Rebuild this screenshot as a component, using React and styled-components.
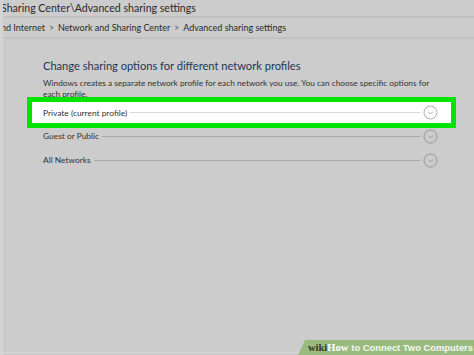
import React from "react";
import styled, { createGlobalStyle } from "styled-components";

const Global = createGlobalStyle`
  html, body { margin: 0; padding: 0; background: #cccccc; }
  body { font-family: Lato, "Open Sans", sans-serif; }
`;

const Page = styled.div`
  width: 474px;
  height: 355px;
  background: #cccccc;
  position: relative;
  overflow: hidden;
  display: flex;
  flex-direction: column;
  border-left: 3px solid #d4d4d4;
  box-sizing: border-box;
`;

const TitleBar = styled.div`
  height: 16px;
  display: flex;
  align-items: center;
  font-size: 10.6px;
  color: #2a2a2a;
  margin-left: -2px;
  border-bottom: 2px solid #c2c2c2;
  white-space: nowrap;
`;

const Breadcrumb = styled.div`
  height: 19px;
  display: flex;
  align-items: center;
  gap: 4px;
  font-size: 9px;
  color: #2a2a2a;
  margin-left: -2px;
  border-bottom: 2px solid #c2c2c2;
  white-space: nowrap;
`;

const Sep = styled.span`
  font-size: 8.5px;
  color: #555;
`;

const Content = styled.div`
  padding: 18px 0 0 40px;
  display: flex;
  flex-direction: column;
`;

const Heading = styled.div`
  font-size: 11.1px;
  color: #1d3654;
  line-height: 17px;
`;

const Desc = styled.div`
  margin-top: 4px;
  font-size: 8.3px;
  line-height: 11px;
  color: #333;
  width: 400px;
`;

const Highlight = styled.div`
  margin: -3px 0 0 -16px;
  width: 429px;
  height: 31px;
  box-sizing: border-box;
  border: 5px solid #00e400;
  background: #ffffff;
  display: flex;
  align-items: center;
  padding-left: 11px;
  padding-right: 13px;
`;

const Row = styled.div`
  display: flex;
  align-items: center;
  height: 16px;
  width: 395px;
`;

const Label = styled.span`
  font-size: 8.4px;
  color: #333;
  white-space: nowrap;
`;

const Line = styled.div`
  flex: 1;
  height: 1px;
  background: ${(p) => p.$c || "#a8a8a8"};
  margin: 0 3px 0 3px;
`;

const Chevron = ({ stroke = "#9a9a9a" }) => (
  <svg width="15" height="15" viewBox="0 0 15 15">
    <circle cx="7.5" cy="7.5" r="6.5" fill="none" stroke={stroke} strokeWidth="1" />
    <path d="M5 6.5 L7.5 9 L10 6.5" fill="none" stroke={stroke} strokeWidth="1" />
  </svg>
);

const Rows = styled.div`
  display: flex;
  flex-direction: column;
  gap: 8px;
`;

const Badge = styled.div`
  position: absolute;
  right: 0;
  bottom: 0;
  width: 176px;
  height: 15px;
  background: #9abb80;
  clip-path: polygon(7px 0, 100% 0, 100% 100%, 0 100%);
  display: flex;
  align-items: center;
  padding-left: 10px;
  box-sizing: border-box;
  font-family: "Liberation Sans", Arial, sans-serif;
  font-weight: bold;
  font-size: 9.4px;
  color: #f4f8ef;
  white-space: nowrap;
`;

const Wiki = styled.span`
  font-family: "Liberation Serif", serif;
  font-weight: bold;
  color: #2f3a27;
  font-size: 10.5px;
`;

const How = styled.span`
  font-family: "Liberation Serif", serif;
  font-weight: bold;
  color: #ffffff;
  font-size: 10.5px;
  margin-right: 3px;
`;

const BottomLine = styled.div`
  position: absolute;
  left: 0;
  right: 0;
  bottom: 2px;
  height: 1px;
  background: #d6d6d6;
`;

export default function App() {
  return (
    <>
      <Global />
      <Page>
        <TitleBar>Sharing Center\Advanced sharing settings</TitleBar>
        <Breadcrumb>
          <span>nd Internet</span>
          <Sep>&gt;</Sep>
          <span>Network and Sharing Center</span>
          <Sep>&gt;</Sep>
          <span>Advanced sharing settings</span>
        </Breadcrumb>
        <Content>
          <Heading>Change sharing options for different network profiles</Heading>
          <Desc>
            Windows creates a separate network profile for each network you use. You can choose specific options for
            each profile.
          </Desc>
          <Highlight>
            <Row>
              <Label>Private (current profile)</Label>
              <Line $c="#d8d8d8" />
              <Chevron stroke="#b0b0b0" />
            </Row>
          </Highlight>
          <Rows>
            <Row>
              <Label>Guest or Public</Label>
              <Line />
              <Chevron />
            </Row>
            <Row>
              <Label>All Networks</Label>
              <Line />
              <Chevron />
            </Row>
          </Rows>
        </Content>
        <BottomLine />
        <Badge>
          <Wiki>wiki</Wiki>
          <How>How</How>
          to Connect Two Computers
        </Badge>
      </Page>
    </>
  );
}
